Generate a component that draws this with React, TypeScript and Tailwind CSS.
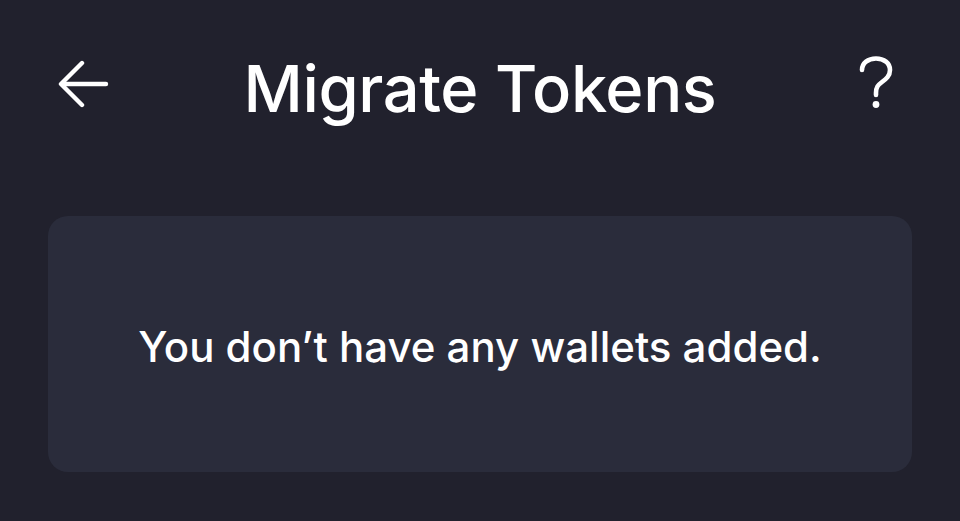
import React from "react";

function BackArrow() {
  return (
    <svg width="52" height="48" viewBox="0 0 52 48" fill="none" stroke="#ffffff" strokeWidth="4.4" strokeLinecap="round" strokeLinejoin="round">
      <path d="M48 24H4" />
      <path d="M24 3L3 24l21 21" />
    </svg>
  );
}

function HelpMark() {
  return (
    <svg width="36" height="54" viewBox="0 0 36 54" fill="none" stroke="#ffffff" strokeWidth="4.6" strokeLinecap="round" strokeLinejoin="round">
      <path d="M4 14C4 7 10 2.5 18 2.5s14 4.5 14 11.5c0 6-4 9-8 12-4 3-6 5-6 11v2" />
      <circle cx="18" cy="48.5" r="3.4" fill="#ffffff" stroke="none" />
    </svg>
  );
}

export default function App() {
  return (
    <div
      className="w-[960px] h-[521px] bg-[#21212d] text-white overflow-hidden flex flex-col"
      style={{ fontFamily: "Inter, 'Noto Sans', sans-serif" }}
    >
      <header className="relative h-[180px] flex items-center justify-between pl-[58px] pr-[66px] pb-[4px]">
        <button className="flex items-center mt-[-8px]">
          <BackArrow />
        </button>
        <h1 className="absolute left-0 right-0 text-center text-[65px] font-medium tracking-[-0.4px] leading-none pointer-events-none mt-[0px]">
          Migrate Tokens
        </h1>
        <button className="flex items-center mt-[-10px]">
          <HelpMark />
        </button>
      </header>
      <main className="px-12 pt-[36px]">
        <div className="h-[256px] rounded-[20px] bg-[#2a2c3b] flex items-center justify-center">
          <p className="text-[42px] font-medium leading-none mt-[6px] tracking-[0px]">
            You don’t have any wallets added.
          </p>
        </div>
      </main>
    </div>
  );
}
